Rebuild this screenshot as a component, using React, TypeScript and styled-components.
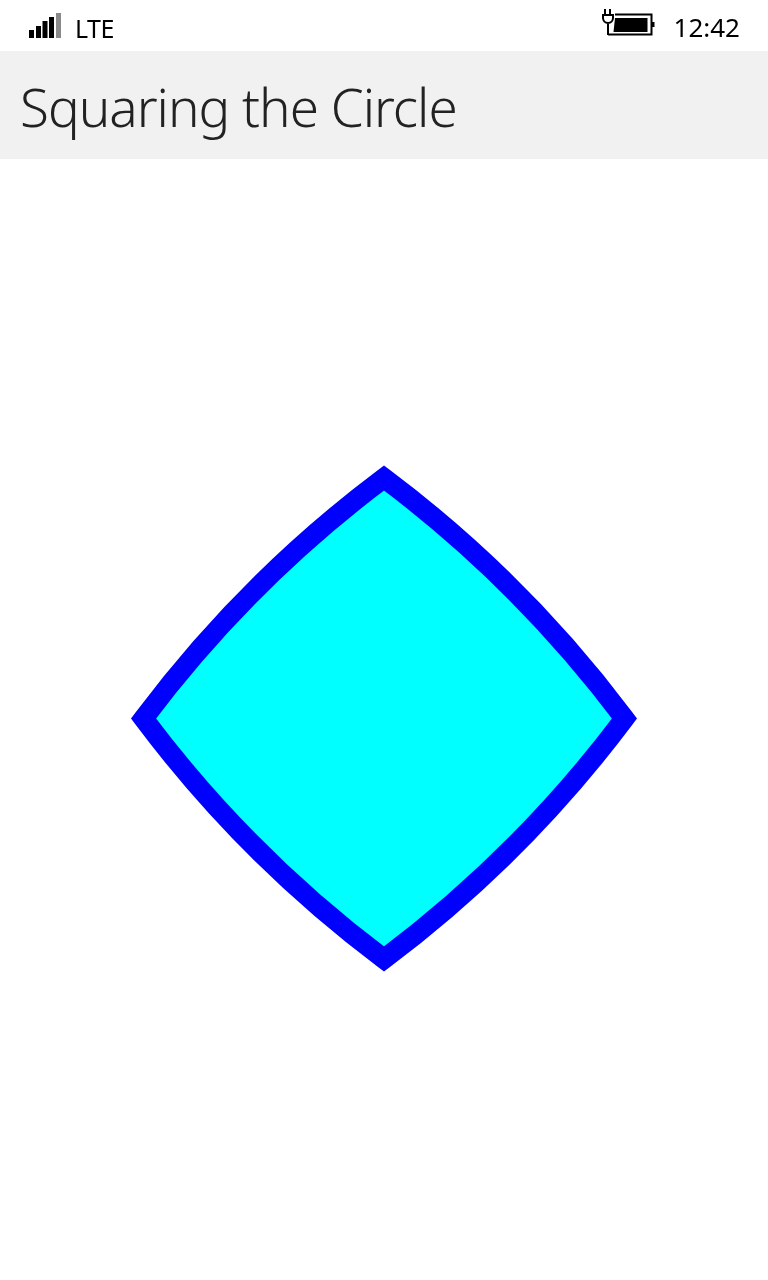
import React from "react";
import styled, { createGlobalStyle } from "styled-components";

const Global = createGlobalStyle`
  html, body { margin: 0; padding: 0; background: #fff; }
  #root { height: 1280px; }
`;

const Page = styled.div`
  display: flex;
  flex-direction: column;
  width: 768px;
  height: 1280px;
  overflow: hidden;
  background: #fff;
`;

const StatusBar = styled.div`
  display: flex;
  align-items: center;
  justify-content: space-between;
  height: 51px;
  padding: 0 28px 0 29px;
  box-sizing: border-box;
  color: #000;
  font-family: "Noto Sans", "Open Sans", sans-serif;
  will-change: transform;
`;

const StatusGroup = styled.div<{ $gap: number }>`
  display: flex;
  align-items: center;
  gap: ${(p) => p.$gap}px;
`;

const Lte = styled.span`
  font-size: 25px;
  font-weight: 400;
  letter-spacing: -0.5px;
  line-height: 1;
  margin-top: 6px;
`;

const Clock = styled.span`
  font-size: 26px;
  font-weight: 400;
  line-height: 1;
  margin-top: 2px;
`;

const TitleBar = styled.header`
  display: flex;
  align-items: center;
  height: 108px;
  padding-left: 20px;
  background: #f1f1f1;
`;

const Title = styled.h1`
  margin: 0 0 -2px;
  color: #222;
  font-family: "Noto Sans", "Open Sans", sans-serif;
  font-size: 53px;
  font-weight: 300;
  letter-spacing: -1px;
  line-height: 1;
`;

const Stage = styled.main`
  display: flex;
  flex: 1;
  align-items: center;
  justify-content: center;
  padding-bottom: 1px;
`;

const BatterySvg = styled.svg`
  margin-bottom: 7px;
`;

const SignalIcon = () => (
  <svg width="32" height="26" viewBox="0 0 32 26" fill="#000">
    <rect x="0" y="17" width="5" height="8" />
    <rect x="7" y="13" width="5" height="12" />
    <rect x="13.5" y="8" width="5" height="17" />
    <rect x="20" y="4" width="5" height="21" />
    <rect x="27" y="0" width="5" height="25" fill="#8a8a8a" />
  </svg>
);

const BatteryIcon = () => (
  <BatterySvg width="55" height="28" viewBox="0 0 55 28">
    <path
      d="M4 1v6M9 1v6M2 7h10v3a5 5 0 0 1-10 0zM7 15v12M7 26.5h43.500V6.500H14"
      fill="none"
      stroke="#000"
      strokeWidth="2"
    />
    <path d="M14 10h32.500v14H12.500z" fill="#000" />
    <rect x="51" y="14" width="2.500" height="5" fill="#000" />
  </BatterySvg>
);

const Shape = () => (
  <svg width="560" height="560" viewBox="-280 -279.5 560 560">
    <path
      d="M0 -240.500 A 1200 1200 0 0 1 240.500 0 A 1200 1200 0 0 1 0 240.500 A 1200 1200 0 0 1 -240.500 0 A 1200 1200 0 0 1 0 -240.500 Z"
      fill="#00ffff"
      stroke="#0000ff"
      strokeWidth="20"
      strokeMiterlimit="10"
    />
  </svg>
);

export default function App() {
  return (
    <Page>
      <Global />
      <StatusBar>
        <StatusGroup $gap={14}>
          <SignalIcon />
          <Lte>LTE</Lte>
        </StatusGroup>
        <StatusGroup $gap={18}>
          <BatteryIcon />
          <Clock>12:42</Clock>
        </StatusGroup>
      </StatusBar>
      <TitleBar>
        <Title>Squaring the Circle</Title>
      </TitleBar>
      <Stage>
        <Shape />
      </Stage>
    </Page>
  );
}
